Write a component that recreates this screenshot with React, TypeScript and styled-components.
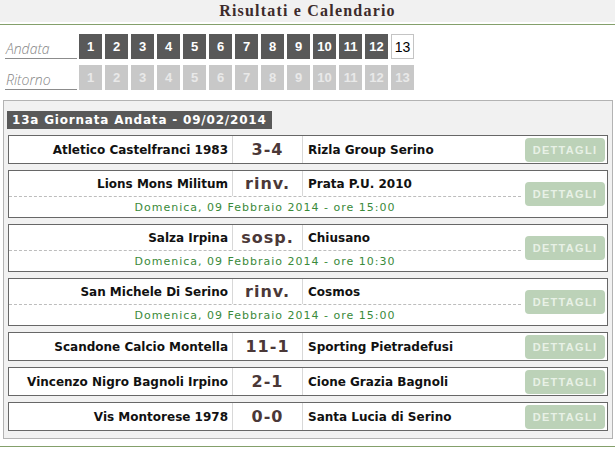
import React from "react";
import styled, { createGlobalStyle, css } from "styled-components";

const GlobalStyle = createGlobalStyle`
  body {
    margin: 0;
    background: #ffffff;
    font-family: "DejaVu Sans", Verdana, sans-serif;
  }
`;

const Page = styled.div`
  width: 615px;
`;

const TitleBar = styled.div`
  height: 22px;
  background: #f1f1f1;
  display: flex;
  align-items: center;
  justify-content: center;
  font-family: "Liberation Serif", "Times New Roman", serif;
  font-weight: bold;
  font-size: 16px;
  letter-spacing: 1.2px;
  color: #3d2b2b;
`;

const Rule = styled.div<{ $gap: number }>`
  margin-top: ${(p) => p.$gap}px;
  border-top: 1px solid #84a06b;
`;

const RoundNav = styled.div`
  margin-top: 9px;
  padding-left: 5px;
  display: flex;
  flex-direction: column;
  gap: 6px;
`;

const RoundRow = styled.div`
  display: flex;
  align-items: flex-end;
  gap: 2px;
`;

const RoundLabel = styled.div`
  width: 71px;
  padding-left: 1px;
  border-bottom: 1px solid #8c8c8c;
  font-family: "Open Sans", sans-serif;
  font-style: italic;
  font-weight: 300;
  font-size: 14px;
  line-height: 18px;
  color: #858585;
`;

const RoundList = styled.div`
  display: flex;
  gap: 3px;
`;

type BoxKind = "dark" | "active" | "muted";

const RoundBox = styled.div<{ $kind: BoxKind }>`
  box-sizing: border-box;
  width: 23px;
  height: 25px;
  display: flex;
  align-items: center;
  justify-content: center;
  font-family: "Liberation Sans", Arial, sans-serif;
  font-size: 13px;
  font-weight: bold;
  ${(p) =>
    p.$kind === "dark" &&
    css`
      background: #595959;
      color: #ffffff;
    `}
  ${(p) =>
    p.$kind === "active" &&
    css`
      background: #ffffff;
      border: 1px solid #c4c4c4;
      color: #000000;
      font-weight: normal;
      font-size: 14px;
    `}
  ${(p) =>
    p.$kind === "muted" &&
    css`
      background: #c8c8c8;
      color: #e9e9e9;
    `}
`;

const Panel = styled.div`
  margin: 10px 0 0 3px;
  width: 610px;
  box-sizing: border-box;
  border: 1px solid #b3b3b3;
  background: #f1f1f1;
  padding: 10px 4px 7px;
  display: flex;
  flex-direction: column;
  gap: 6px;
`;

const DayTitle = styled.div`
  align-self: flex-start;
  margin-left: -1px;
  height: 18px;
  line-height: 18px;
  padding: 0 5px;
  background: #595959;
  color: #ffffff;
  font-family: "DejaVu Sans", Verdana, sans-serif;
  font-weight: bold;
  font-size: 12px;
  letter-spacing: 0.8px;
`;

const MatchCard = styled.div`
  display: grid;
  grid-template-columns: 1fr 86px;
  border: 1px solid #676767;
  background: #ffffff;
`;

const MatchMain = styled.div`
  display: flex;
  flex-direction: column;
`;

const TeamsLine = styled.div<{ $compact: boolean }>`
  display: grid;
  grid-template-columns: 224px 70px 1fr;
  height: ${(p) => (p.$compact ? 25 : 27)}px;
`;

const teamText = css`
  display: flex;
  align-items: center;
  white-space: nowrap;
  font-family: "DejaVu Sans", Verdana, sans-serif;
  font-weight: bold;
  font-size: 12px;
  color: #111111;
`;

const HomeTeam = styled.div`
  ${teamText}
  justify-content: flex-end;
  padding-right: 4px;
  border-right: 1px solid #d8d8d8;
`;

const Score = styled.div`
  display: flex;
  align-items: center;
  justify-content: center;
  border-right: 1px solid #d8d8d8;
  font-family: "DejaVu Sans", Verdana, sans-serif;
  font-weight: bold;
  font-size: 16px;
  letter-spacing: 1px;
  color: #4b3838;
`;

const AwayTeam = styled.div`
  ${teamText}
  padding-left: 5px;
`;

const DateLine = styled.div`
  border-top: 1px dashed #bdbdbd;
  height: 20px;
  display: flex;
  align-items: center;
  justify-content: center;
  font-family: "DejaVu Sans", Verdana, sans-serif;
  font-size: 11px;
  letter-spacing: 1px;
  color: #3a8a3a;
`;

const ButtonCell = styled.div`
  display: flex;
  align-items: center;
  justify-content: flex-end;
  padding-right: 2px;
`;

const DetailsButton = styled.button`
  width: 80px;
  height: 24px;
  padding: 0;
  border: 0;
  border-radius: 4px;
  background: #bcd2b8;
  color: #e8f1e6;
  font-family: "Liberation Sans", Arial, sans-serif;
  font-weight: bold;
  font-size: 11px;
  letter-spacing: 1.3px;
  text-transform: uppercase;
`;

type Match = {
  home: string;
  score: string;
  away: string;
  date?: string;
};

const matches: Match[] = [
  { home: "Atletico Castelfranci 1983", score: "3-4", away: "Rizla Group Serino" },
  {
    home: "Lions Mons Militum",
    score: "rinv.",
    away: "Prata P.U. 2010",
    date: "Domenica, 09 Febbraio 2014 - ore 15:00",
  },
  {
    home: "Salza Irpina",
    score: "sosp.",
    away: "Chiusano",
    date: "Domenica, 09 Febbraio 2014 - ore 10:30",
  },
  {
    home: "San Michele Di Serino",
    score: "rinv.",
    away: "Cosmos",
    date: "Domenica, 09 Febbraio 2014 - ore 15:00",
  },
  { home: "Scandone Calcio Montella", score: "11-1", away: "Sporting Pietradefusi" },
  { home: "Vincenzo Nigro Bagnoli Irpino", score: "2-1", away: "Cione Grazia Bagnoli" },
  { home: "Vis Montorese 1978", score: "0-0", away: "Santa Lucia di Serino" },
];

const rounds = Array.from({ length: 13 }, (_, i) => i + 1);

export default function App() {
  return (
    <Page>
      <GlobalStyle />
      <TitleBar>Risultati e Calendario</TitleBar>
      <Rule $gap={2} />
      <RoundNav>
        <RoundRow>
          <RoundLabel>Andata</RoundLabel>
          <RoundList>
            {rounds.map((n) => (
              <RoundBox key={n} $kind={n === 13 ? "active" : "dark"}>
                {n}
              </RoundBox>
            ))}
          </RoundList>
        </RoundRow>
        <RoundRow>
          <RoundLabel>Ritorno</RoundLabel>
          <RoundList>
            {rounds.map((n) => (
              <RoundBox key={n} $kind="muted">
                {n}
              </RoundBox>
            ))}
          </RoundList>
        </RoundRow>
      </RoundNav>
      <Panel>
        <DayTitle>13a Giornata Andata - 09/02/2014</DayTitle>
        {matches.map((m) => (
          <MatchCard key={m.home}>
            <MatchMain>
              <TeamsLine $compact={!!m.date}>
                <HomeTeam>{m.home}</HomeTeam>
                <Score>{m.score}</Score>
                <AwayTeam>{m.away}</AwayTeam>
              </TeamsLine>
              {m.date && <DateLine>{m.date}</DateLine>}
            </MatchMain>
            <ButtonCell>
              <DetailsButton>Dettagli</DetailsButton>
            </ButtonCell>
          </MatchCard>
        ))}
      </Panel>
      <Rule $gap={7} />
    </Page>
  );
}
